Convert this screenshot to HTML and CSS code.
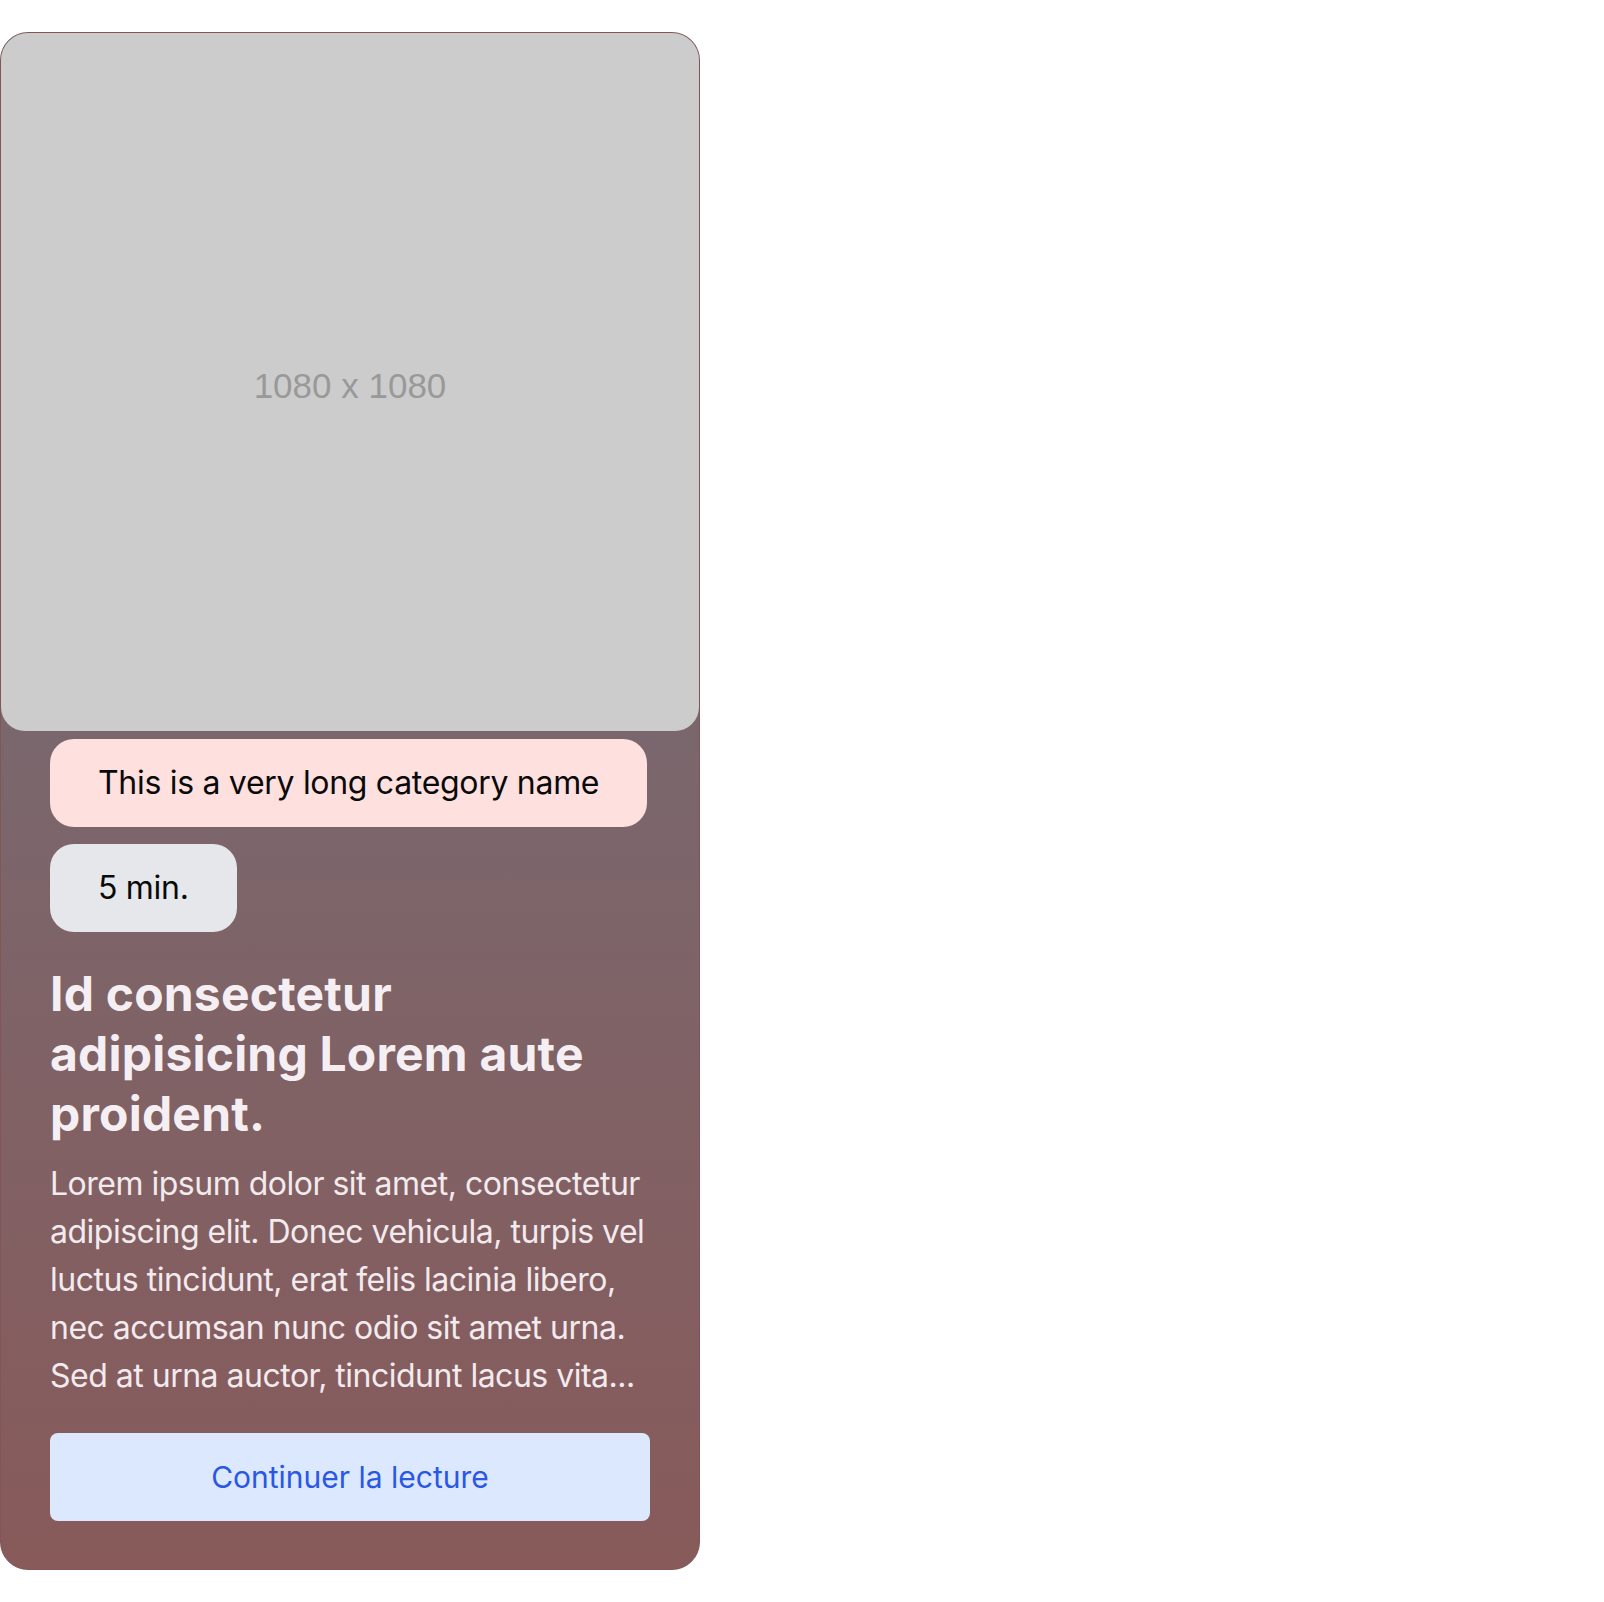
FILE: index.html
```html
<!DOCTYPE html>
<html lang="fr">
<head>
<meta charset="utf-8">
<title>Card</title>
<link rel="stylesheet" href="styles.css">
</head>
<body>
<article class="card">
  <div class="cover"><span class="cover-label">1080 x 1080</span></div>
  <div class="content">
    <span class="pill pill-category">This is a very long category name</span>
    <span class="pill pill-time">5 min.</span>
    <h2 class="title">Id consectetur adipisicing Lorem aute proident.</h2>
    <p class="excerpt">Lorem ipsum dolor sit amet, consectetur adipiscing elit. Donec vehicula, turpis vel luctus tincidunt, erat felis lacinia libero, nec accumsan nunc odio sit amet urna. Sed at urna auctor, tincidunt lacus vita...</p>
    <a class="button" href="#">Continuer la lecture</a>
  </div>
</article>
</body>
</html>
```
FILE: styles.css
```css
html, body {
  margin: 0;
  padding: 0;
  background: #ffffff;
}
body {
  padding-top: 32px;
  font-family: Inter, "Noto Sans", sans-serif;
}
.card {
  width: 700px;
  box-sizing: border-box;
  border: 1px solid #825656;
  border-radius: 28px;
  overflow: hidden;
  background: linear-gradient(180deg, #6f6e78 0%, #7a676d 46%, #885a5a 100%);
}
.cover {
  width: 100%;
  aspect-ratio: 1 / 1;
  background: #cccccc;
  border-radius: 0 0 24px 24px;
  display: flex;
  align-items: center;
  justify-content: center;
  box-sizing: border-box;
  padding-top: 8px;
}
.cover-label {
  font-family: "Liberation Sans", Arial, sans-serif;
  font-size: 35px;
  color: #999999;
}
.content {
  display: flex;
  flex-direction: column;
  align-items: flex-start;
  padding: 8px 49px 48px 49px;
}
.pill {
  display: inline-block;
  font-size: 32px;
  line-height: 48px;
  letter-spacing: -0.3px;
  padding: 20px 48px 20px;
  border-radius: 24px;
  color: #0a0a0a;
}
.pill-category {
  background: #fee0df;
}
.pill-time {
  background: #e5e7eb;
  margin-top: 17px;
}
.title {
  margin: 32px 0 0;
  font-size: 48px;
  line-height: 60px;
  font-weight: 700;
  color: #f5eff3;
  letter-spacing: 0.2px;
}
.excerpt {
  margin: 16px 0 0;
  font-size: 32px;
  line-height: 48px;
  letter-spacing: -0.5px;
  color: #f3eaee;
}
.button {
  margin-top: 33px;
  align-self: stretch;
  display: block;
  text-align: center;
  text-decoration: none;
  background: #dbe8fe;
  color: #2a57e3;
  font-size: 30px;
  line-height: 48px;
  padding: 20px 0 20px;
  border-radius: 8px;
}
```
